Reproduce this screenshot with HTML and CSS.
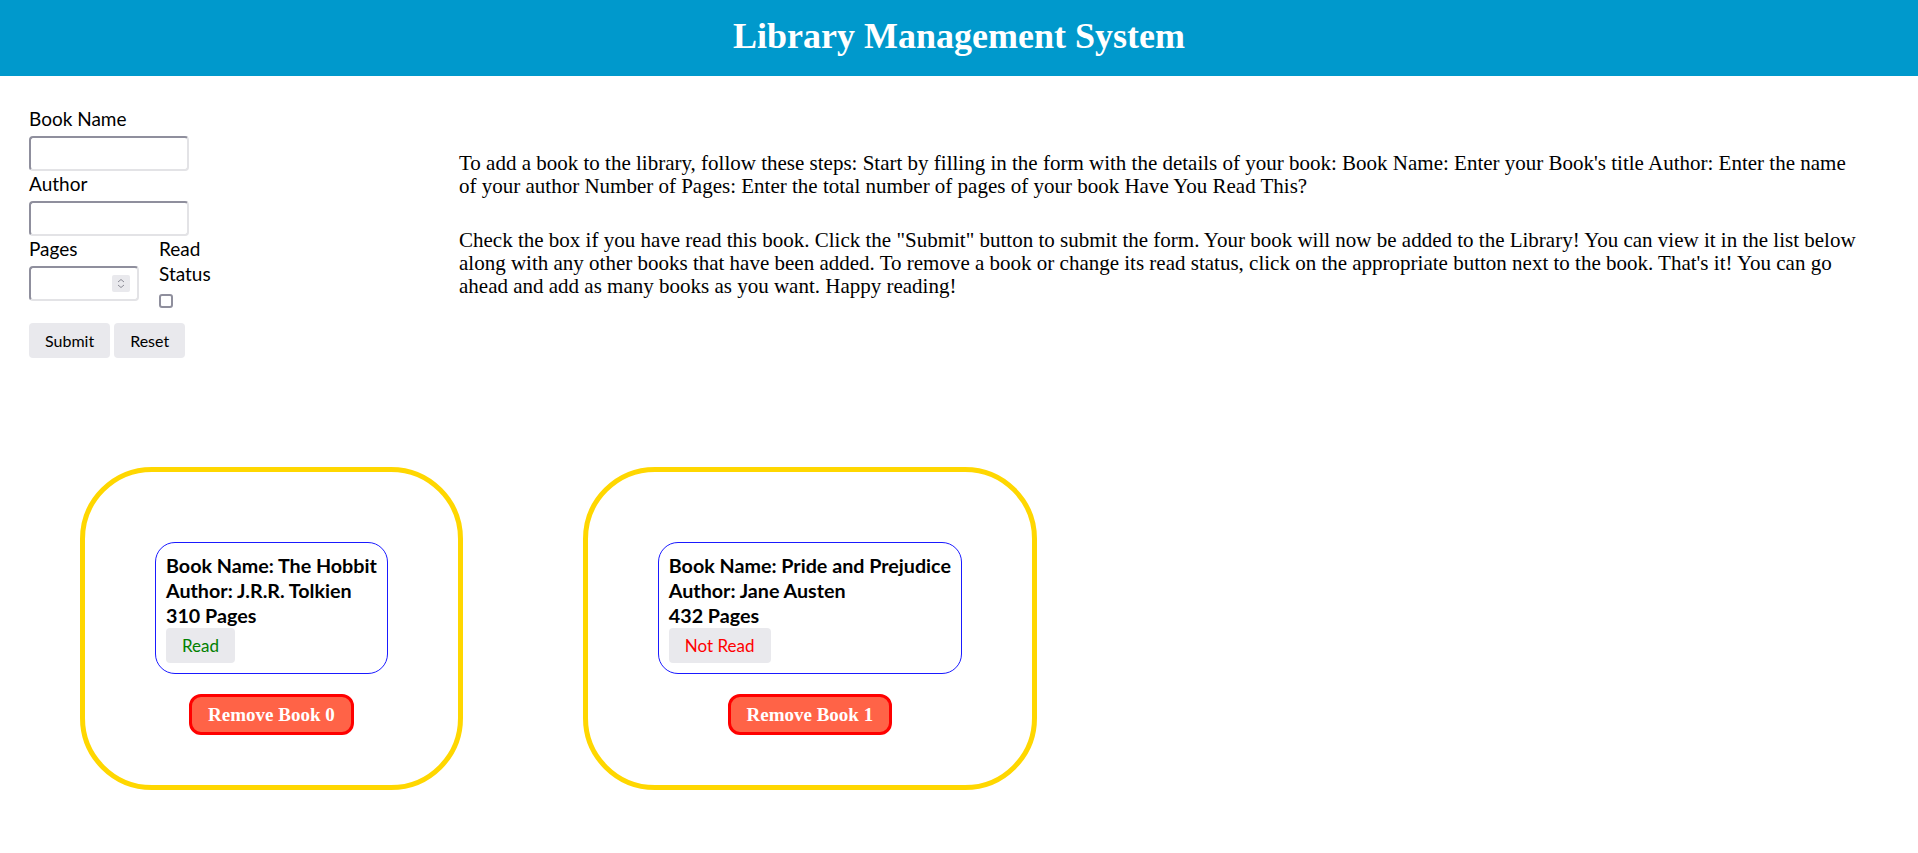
FILE: index.html
```html
<!DOCTYPE html>
<html lang="en">
<head>
<meta charset="utf-8">
<title>Library Management System</title>
<link rel="stylesheet" href="styles.css">
</head>
<body>
<header class="top-bar">
  <h1 class="title">Library Management System</h1>
</header>

<main class="intro">
  <form class="book-form">
    <label class="field-label" for="name">Book Name</label>
    <input class="text-input" id="name" type="text">
    <label class="field-label" for="author">Author</label>
    <input class="text-input" id="author" type="text">
    <div class="form-row">
      <div class="pages-col">
        <label class="field-label" for="pages">Pages</label>
        <div class="number-wrap">
          <input class="text-input number-input" id="pages" type="text">
          <span class="spinner">
            <svg width="18" height="17" viewBox="0 0 18 17">
              <path d="M6 7 L9 4.5 L12 7" fill="none" stroke="#8a8a94" stroke-width="1"/>
              <path d="M6 10 L9 12.5 L12 10" fill="none" stroke="#8a8a94" stroke-width="1"/>
            </svg>
          </span>
        </div>
      </div>
      <div class="read-col">
        <label class="field-label" for="read">Read Status</label>
        <input class="check" id="read" type="checkbox">
      </div>
    </div>
    <div class="form-actions">
      <button class="plain-btn" type="button">Submit</button>
      <button class="plain-btn" type="button">Reset</button>
    </div>
  </form>

  <section class="instructions">
    <p class="para">To add a book to the library, follow these steps: Start by filling in the form with the details of your book: Book Name: Enter your Book's title Author: Enter the name<br>of your author Number of Pages: Enter the total number of pages of your book Have You Read This?</p>
    <p class="para">Check the box if you have read this book. Click the "Submit" button to submit the form. Your book will now be added to the Library! You can view it in the list below<br>along with any other books that have been added. To remove a book or change its read status, click on the appropriate button next to the book. That's it! You can go<br>ahead and add as many books as you want. Happy reading!</p>
  </section>
</main>

<section class="library">
  <div class="book-shell">
    <div class="book-card">
      <div class="book-line">Book Name: The Hobbit</div>
      <div class="book-line">Author: J.R.R. Tolkien</div>
      <div class="book-line">310 Pages</div>
      <button class="status-btn read" type="button">Read</button>
    </div>
    <button class="remove-btn" type="button">Remove Book 0</button>
  </div>
  <div class="book-shell">
    <div class="book-card">
      <div class="book-line">Book Name: Pride and Prejudice</div>
      <div class="book-line">Author: Jane Austen</div>
      <div class="book-line">432 Pages</div>
      <button class="status-btn unread" type="button">Not Read</button>
    </div>
    <button class="remove-btn" type="button">Remove Book 1</button>
  </div>
</section>
</body>
</html>
```
FILE: styles.css
```css
* { box-sizing: border-box; }

body {
  margin: 0;
  background: #ffffff;
  color: #000000;
  font-family: "Liberation Serif", serif;
}

.top-bar {
  background: #0099cc;
  height: 76px;
  padding-bottom: 4px;
}

.title {
  margin: 0;
  text-align: center;
  color: #ffffff;
  font-family: "Liberation Serif", serif;
  font-weight: bold;
  font-size: 36px;
  line-height: 72px;
}

.intro {
  display: flex;
  align-items: flex-start;
  padding: 30px 0 0 29px;
}

.book-form {
  width: 430px;
  flex: none;
  display: flex;
  flex-direction: column;
  align-items: flex-start;
  font-family: Lato, "Noto Sans", sans-serif;
}

.field-label {
  display: block;
  font-size: 19px;
  line-height: 25px;
  margin-bottom: 5px;
}

.text-input {
  width: 160px;
  height: 35px;
  border: 2px solid;
  border-color: #8f8f9d #e3e3e6 #e3e3e6 #8f8f9d;
  border-radius: 4px;
  background: #ffffff;
  font-size: 16px;
  padding: 2px 6px;
  margin: 0;
}

.form-row {
  display: flex;
  gap: 20px;
}

.pages-col { width: 110px; }

.read-col {
  width: 50px;
  display: flex;
  flex-direction: column;
  align-items: flex-start;
}

.number-wrap { position: relative; width: 110px; }

.number-input { width: 110px; }

.spinner {
  position: absolute;
  left: 83px;
  top: 9px;
  width: 18px;
  height: 17px;
  background: #e9e9ed;
  border-radius: 2px;
  display: block;
}

.spinner svg { display: block; }

.check {
  appearance: none;
  -webkit-appearance: none;
  width: 14px;
  height: 14px;
  margin: 3px 0;
  border: 2px solid #8f8f9d;
  border-radius: 3px;
  background: #ffffff;
}

.form-actions {
  margin-top: 12px;
  display: flex;
  gap: 4px;
}

.plain-btn {
  height: 35px;
  padding: 0 16px;
  border: none;
  border-radius: 4px;
  background: #e9e9ed;
  color: #000000;
  font-family: Lato, "Noto Sans", sans-serif;
  font-size: 16px;
}

.instructions {
  width: 1440px;
  margin-top: 46px;
}

.para {
  margin: 0;
  font-family: "Liberation Serif", serif;
  font-size: 21px;
  line-height: 23.3px;
  white-space: nowrap;
}

.para + .para { margin-top: 30px; }

.library {
  display: flex;
  align-items: flex-start;
  gap: 120px;
  padding-left: 80px;
  margin-top: 109px;
}

.book-shell {
  display: flex;
  flex-direction: column;
  align-items: center;
  border: 5px solid #ffd700;
  border-radius: 72px;
  padding: 70px 70px 50px;
}

.book-card {
  border: 1px solid #1a1aff;
  border-radius: 20px;
  padding: 10px;
  display: flex;
  flex-direction: column;
  align-items: flex-start;
}

.book-line {
  font-family: Lato, "Noto Sans", sans-serif;
  font-weight: bold;
  font-size: 19.7px;
  line-height: 25px;
  white-space: nowrap;
}

.status-btn {
  height: 35px;
  padding: 0 16px;
  border: none;
  border-radius: 4px;
  background: #e9e9ed;
  font-family: Lato, "Noto Sans", sans-serif;
  font-size: 17px;
}

.status-btn.read { color: #008000; }
.status-btn.unread { color: #ff0000; }

.remove-btn {
  margin-top: 20px;
  height: 41px;
  padding: 0 16px;
  border: 3px solid #ff0000;
  border-radius: 12px;
  background: #ff6347;
  color: #ffffff;
  font-family: "Liberation Serif", serif;
  font-weight: bold;
  font-size: 19px;
}
```
